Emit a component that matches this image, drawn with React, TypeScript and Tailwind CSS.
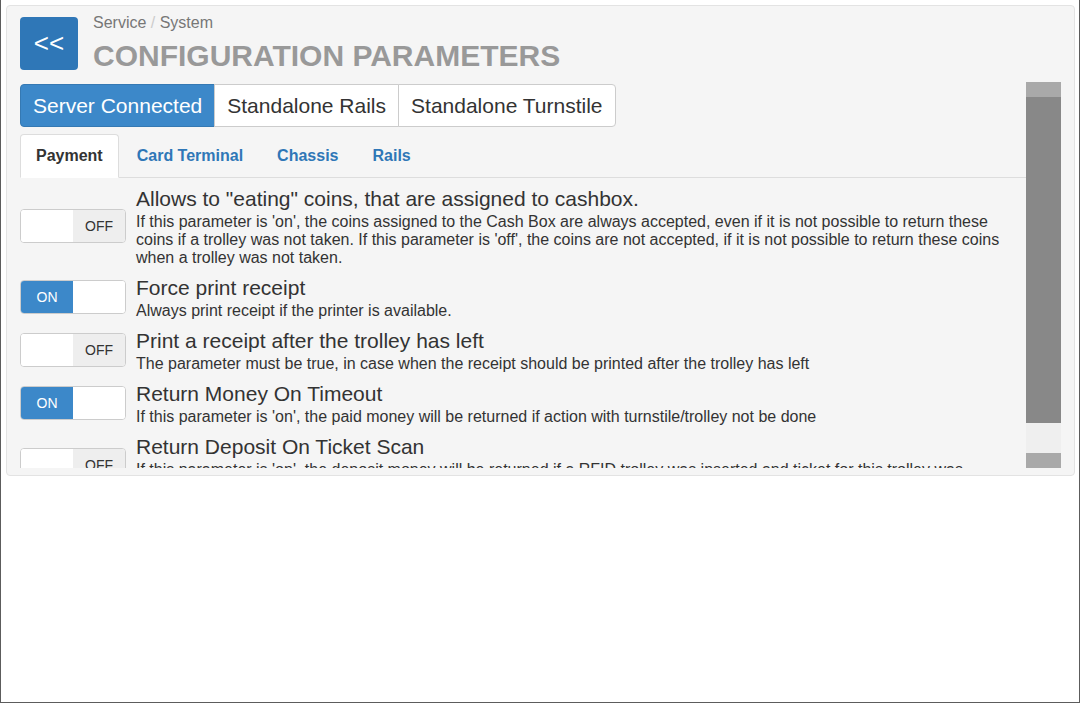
import React from "react";

// Parameter list for the Payment tab
const params = [
  {
    title: 'Allows to "eating" coins, that are assigned to cashbox.',
    desc: "If this parameter is 'on', the coins assigned to the Cash Box are always accepted, even if it is not possible to return these coins if a trolley was not taken. If this parameter is 'off', the coins are not accepted, if it is not possible to return these coins when a trolley was not taken.",
    on: false,
  },
  {
    title: "Force print receipt",
    desc: "Always print receipt if the printer is available.",
    on: true,
  },
  {
    title: "Print a receipt after the trolley has left",
    desc: "The parameter must be true, in case when the receipt should be printed after the trolley has left",
    on: false,
  },
  {
    title: "Return Money On Timeout",
    desc: "If this parameter is 'on', the paid money will be returned if action with turnstile/trolley not be done",
    on: true,
  },
  {
    title: "Return Deposit On Ticket Scan",
    desc: "If this parameter is 'on', the deposit money will be returned if a RFID trolley was inserted and ticket for this trolley was scanned.",
    on: false,
  },
];

const modes = ["Server Connected", "Standalone Rails", "Standalone Turnstile"];
const tabs = ["Payment", "Card Terminal", "Chassis", "Rails"];

const Toggle = ({ on }: { on: boolean }) => (
  <div className="flex h-[34px] w-[106px] shrink-0 overflow-hidden rounded-[4px] border border-[#cccccc] bg-white text-[14px]">
    {on ? (
      <>
        <span className="flex w-1/2 items-center justify-center bg-[#3c88c9] text-white">ON</span>
        <span className="w-1/2 bg-white" />
      </>
    ) : (
      <>
        <span className="w-1/2 bg-white" />
        <span className="flex w-1/2 items-center justify-center bg-[#eeeeee] text-[#333]">OFF</span>
      </>
    )}
  </div>
);

export default function App() {
  return (
    <div className="h-[703px] w-full overflow-hidden border-x border-b border-[#5c5c5c] bg-white pt-[5px] pl-[5px] pr-[4px] font-['Liberation_Sans',Arial,sans-serif]">
      {/* Panel */}
      <div className="rounded-[4px] border border-[#e3e3e3] bg-[#f5f5f5] px-[13px] pt-[11px] pb-[7px]">
        {/* Header */}
        <div className="flex items-start">
          <button
            type="button"
            className="flex h-[53px] w-[58px] items-center justify-center rounded-[4px] bg-[#2f77b7] text-[26px] text-white"
          >
            &lt;&lt;
          </button>
          <div className="ml-[15px] -mt-[3px]">
            <div className="text-[16px] leading-[18px] text-[#777]">
              Service <span className="text-[#cccccc]">/</span> System
            </div>
            <div className="mt-[7px] text-[30px] font-bold leading-[34px] text-[#999]">
              CONFIGURATION PARAMETERS
            </div>
          </div>
        </div>

        {/* Scroll area */}
        <div className="mt-[9px] flex h-[386px] overflow-hidden">
          <div className="flex-1 overflow-hidden pt-[2px]">
            {/* Mode buttons */}
            <div className="flex">
              {modes.map((m, i) => (
                <div
                  key={m}
                  className={`flex h-[43px] items-center border px-[12px] text-[21px] ${
                    i === 0
                      ? "rounded-l-[4px] border-[#3579b3] bg-[#3c88c9] text-white"
                      : "-ml-px border-[#cccccc] bg-white text-[#333]"
                  } ${i === modes.length - 1 ? "rounded-r-[4px]" : ""}`}
                >
                  {m}
                </div>
              ))}
            </div>

            {/* Tabs */}
            <div className="mt-[7px] flex border-b border-[#dddddd]">
              {tabs.map((t, i) => (
                <div
                  key={t}
                  className={`mr-[2px] -mb-px rounded-t-[4px] border px-[15px] py-[10px] text-[16px] font-bold leading-[22px] ${
                    i === 0
                      ? "border-[#dddddd] border-b-white bg-white text-[#333]"
                      : "border-transparent text-[#2f77b7]"
                  }`}
                >
                  {t}
                </div>
              ))}
            </div>

            {/* Parameters */}
            <div className="flex flex-col gap-[7px] pt-[7px] pr-[10px]">
              {params.map((p) => (
                <div key={p.title} className="flex items-center">
                  <Toggle on={p.on} />
                  <div className="ml-[10px] text-[#333]">
                    <div className="text-[21px] leading-[28px]">{p.title}</div>
                    <div className="text-[16px] leading-[18px]">{p.desc}</div>
                  </div>
                </div>
              ))}
            </div>
          </div>

          {/* Scrollbar */}
          <div className="flex w-[35px] flex-col">
            <div className="h-[15px] bg-[#a9a9a9]" />
            <div className="h-[326px] bg-[#888888]" />
            <div className="h-[30px] bg-[#efefef]" />
            <div className="h-[15px] bg-[#a9a9a9]" />
          </div>
        </div>
      </div>
    </div>
  );
}
